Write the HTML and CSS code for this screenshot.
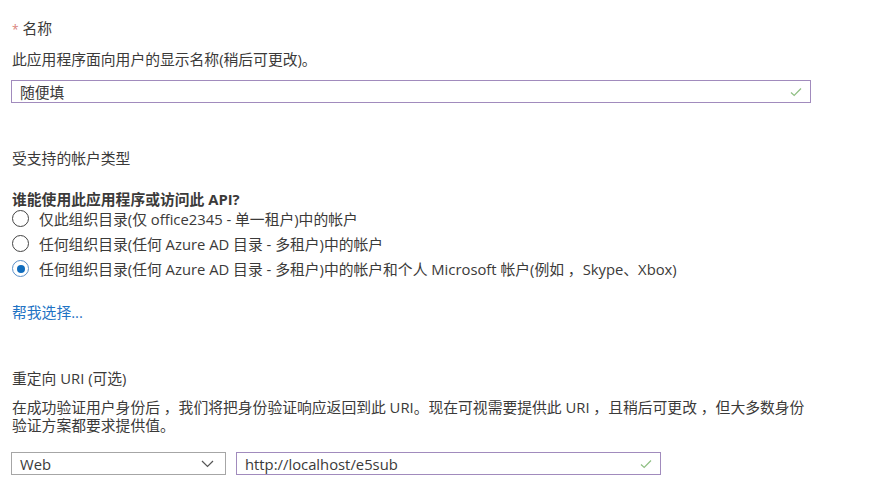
FILE: index.html
```html
<!DOCTYPE html>
<html lang="zh-CN">
<head>
  <meta charset="UTF-8" />
  <title>注册应用程序</title>
  <link rel="stylesheet" href="styles.css">
</head>
<body>

<div class="campo">
  <div class="titulo"><span class="req">*</span> 名称</div>
  <p class="ayuda">此应用程序面向用户的显示名称(稍后可更改)。</p>
  <div class="caja caja-nombre">
    <span>随便填</span>
    <svg class="check" width="12" height="10" viewBox="0 0 12 10"><path d="M1 5.5 L4.2 8.5 L11 1.5" fill="none" stroke="#8fbf83" stroke-width="1.2"/></svg>
  </div>
</div>

<div class="campo cuentas">
  <div class="titulo">受支持的帐户类型</div>
  <div class="pregunta">谁能使用此应用程序或访问此 API?</div>
  <label class="opcion"><span class="radio"></span>仅此组织目录(仅 office2345 - 单一租户)中的帐户</label>
  <label class="opcion"><span class="radio"></span>任何组织目录(任何 Azure AD 目录 - 多租户)中的帐户</label>
  <label class="opcion"><span class="radio activo"></span>任何组织目录(任何 Azure AD 目录 - 多租户)中的帐户和个人 Microsoft 帐户(例如 ，Skype、Xbox)</label>
  <a class="enlace" href="#">帮我选择...</a>
</div>

<div class="campo redir">
  <div class="titulo">重定向 URI (可选)</div>
  <p class="ayuda parrafo">在成功验证用户身份后 ，我们将把身份验证响应返回到此 URI。现在可视需要提供此 URI ，且稍后可更改 ，但大多数身份验证方案都要求提供值。</p>
  <div class="fila">
    <div class="caja selector">
      <span>Web</span>
      <svg width="13" height="8" viewBox="0 0 13 8"><path d="M1 1 L6.5 6.5 L12 1" fill="none" stroke="#555" stroke-width="1.2"/></svg>
    </div>
    <div class="caja caja-uri">
      <span>http://localhost/e5sub</span>
      <svg class="check" width="12" height="10" viewBox="0 0 12 10"><path d="M1 5.5 L4.2 8.5 L11 1.5" fill="none" stroke="#8fbf83" stroke-width="1.2"/></svg>
    </div>
  </div>
</div>

</body>
</html>
```

FILE: styles.css
```css
body {
  margin: 0;
  padding: 18px 0 0 12px;
  font-family: "Open Sans", "Noto Sans CJK SC", sans-serif;
  font-size: 14.8px;
  color: #3b3a39;
  background: #fff;
}
p { margin: 0; }

.titulo { line-height: 20px; color: #3b3a39; }
.req { color: #d9827a; font-size: 12px; }
.ayuda { margin-top: 10px; line-height: 18px; }

.caja {
  display: flex;
  align-items: center;
  justify-content: space-between;
  box-sizing: border-box;
  height: 23px;
  padding: 0 8px 0 8px;
  border: 1px solid #a18bbd;
  background: #fff;
}
.caja-nombre { width: 800px; margin-left: -1px; margin-top: 12px; }
.check { margin-top: 1px; }

.cuentas { margin-top: 45px; }
.pregunta { font-weight: bold; margin-top: 24px; line-height: 14px; }
.opcion {
  display: flex;
  align-items: center;
  height: 25px;
  line-height: 18px;
}
.radio {
  width: 15px;
  height: 15px;
  border: 1px solid #444;
  border-radius: 50%;
  margin-right: 10px;
  display: flex;
  align-items: center;
  justify-content: center;
  flex-shrink: 0;
}
.radio.activo { border-color: #5b8fc7; }
.radio.activo::after {
  content: "";
  width: 8px;
  height: 8px;
  border-radius: 50%;
  background: #0f6cbd;
}
.enlace {
  display: block;
  margin-top: 22px;
  color: #1f73c4;
  text-decoration: none;
  line-height: 18px;
}

.redir { margin-top: 47px; }
.parrafo { width: 800px; margin-top: 10px; }
.fila { display: flex; gap: 10px; margin-top: 18px; margin-left: -1px; }
.selector { width: 215px; border-color: #a6a6a6; padding-right: 11px; }
.caja-uri { width: 425px; }
```
